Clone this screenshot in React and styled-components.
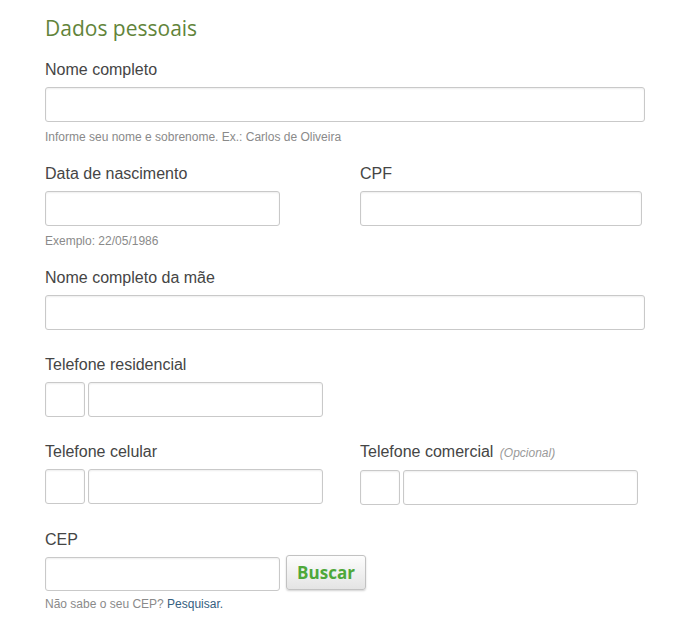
import styled, { createGlobalStyle } from "styled-components";

const GlobalStyle = createGlobalStyle`
  html, body {
    margin: 0;
    padding: 0;
    background: #ffffff;
  }
  body {
    font-family: "Liberation Sans", Arial, sans-serif;
  }
`;

export default function App() {
  return (
    <>
      <GlobalStyle />
      <Form>
        <Title>Dados pessoais</Title>

        <Row>
          <Field>
            <Label>Nome completo</Label>
            <Input $w={600} />
            <Hint>Informe seu nome e sobrenome. Ex.: Carlos de Oliveira</Hint>
          </Field>
        </Row>

        <Row>
          <Field $w={315}>
            <Label>Data de nascimento</Label>
            <Input $w={235} />
            <Hint>Exemplo: 22/05/1986</Hint>
          </Field>
          <Field>
            <Label>CPF</Label>
            <Input $w={282} />
          </Field>
        </Row>

        <Row>
          <Field>
            <Label>Nome completo da mãe</Label>
            <Input $w={600} />
          </Field>
        </Row>

        <Row>
          <Field>
            <Label>Telefone residencial</Label>
            <Phone>
              <Input $w={40} />
              <Input $w={235} />
            </Phone>
          </Field>
        </Row>

        <Row>
          <Field $w={315}>
            <Label>Telefone celular</Label>
            <Phone>
              <Input $w={40} />
              <Input $w={235} />
            </Phone>
          </Field>
          <Field>
            <Label>
              Telefone comercial <Optional>(Opcional)</Optional>
            </Label>
            <Phone>
              <Input $w={40} />
              <Input $w={235} />
            </Phone>
          </Field>
        </Row>

        <Row>
          <Field>
            <Label>CEP</Label>
            <Zip>
              <Input $w={235} $h={34} />
              <Button type="button">Buscar</Button>
            </Zip>
            <Hint $top={6}>
              Não sabe o seu CEP? <Link href="#">Pesquisar.</Link>
            </Hint>
          </Field>
        </Row>
      </Form>
    </>
  );
}

const Form = styled.form`
  width: 698px;
  height: 636px;
  box-sizing: border-box;
  padding: 14px 45px 0;
  display: flex;
  flex-direction: column;
`;

const Title = styled.h2`
  margin: 0 0 19px;
  font-family: "Open Sans", sans-serif;
  font-weight: 400;
  font-size: 21px;
  line-height: 28px;
  color: #62843a;
`;

const Row = styled.div`
  display: flex;
  align-items: flex-start;
  margin-bottom: 26px;
`;

const Field = styled.div`
  display: flex;
  flex-direction: column;
  width: ${(p) => (p.$w ? `${p.$w}px` : "auto")};
  flex-shrink: 0;
`;

const Label = styled.label`
  display: block;
  font-size: 16px;
  line-height: 18px;
  color: #454545;
  margin-bottom: 8px;
  white-space: nowrap;
`;

const Optional = styled.em`
  font-size: 12px;
  color: #9a9a9a;
  margin-left: 2px;
`;

const Input = styled.input`
  box-sizing: border-box;
  width: ${(p) => p.$w}px;
  height: ${(p) => p.$h ?? 35}px;
  margin: 0;
  padding: 0 8px;
  border: 1px solid #c9c9c9;
  border-radius: 3px;
  background: #ffffff;
  box-shadow: inset 0 1px 2px rgba(0, 0, 0, 0.07);
  font-family: "Liberation Sans", Arial, sans-serif;
  font-size: 14px;
  outline: none;
`;

const Phone = styled.div`
  display: flex;
  gap: 3px;
`;

const Zip = styled.div`
  display: flex;
  align-items: flex-start;
  gap: 6px;
`;

const Button = styled.button`
  box-sizing: border-box;
  width: 80px;
  height: 35px;
  margin-top: -2px;
  padding: 0;
  border: 1px solid #c2c2c2;
  border-radius: 3px;
  background: linear-gradient(#fdfdfd, #e4e4e4);
  box-shadow: 0 1px 2px rgba(0, 0, 0, 0.18);
  font-family: "Open Sans", sans-serif;
  font-weight: 700;
  font-size: 17px;
  color: #4ea83a;
  cursor: pointer;
`;

const Hint = styled.p`
  margin: ${(p) => p.$top ?? 8}px 0 -5px;
  font-size: 12px;
  line-height: 14px;
  color: #8a8a8a;
`;

const Link = styled.a`
  color: #36607f;
  text-decoration: none;
`;
